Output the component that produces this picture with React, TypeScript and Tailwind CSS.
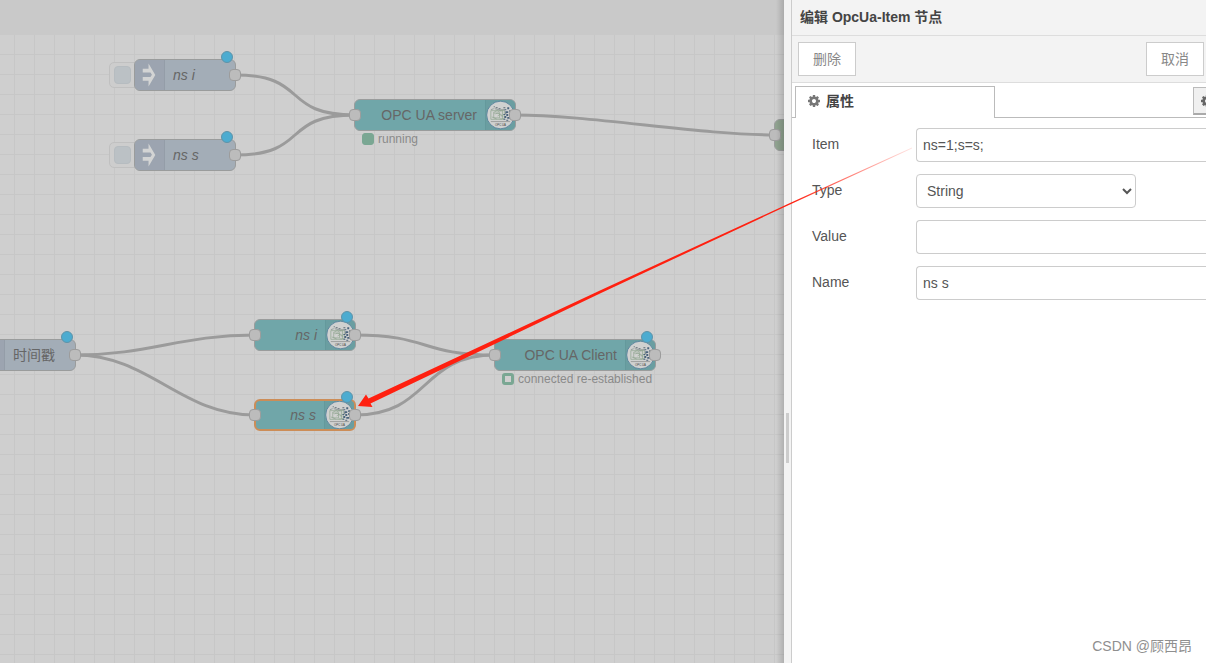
import React from "react";

type NodeKind = "inject" | "opcua" | "debug";

interface FlowNode {
  id: string;
  kind: NodeKind;
  x: number;
  y: number;
  width: number;
  label: string;
  italic?: boolean;
  changed?: boolean;
  selected?: boolean;
  input?: boolean;
  output?: boolean;
  status?: { text: string; ring?: boolean };
}

const nodes: FlowNode[] = [
  { id: "inject-i", kind: "inject", x: 135, y: 60, width: 100, label: "ns i", italic: true, changed: true, output: true },
  { id: "inject-s", kind: "inject", x: 135, y: 140, width: 100, label: "ns s", italic: true, changed: true, output: true },
  { id: "server", kind: "opcua", x: 355, y: 100, width: 160, label: "OPC UA server", input: true, output: true, status: { text: "running" } },
  { id: "debug", kind: "debug", x: 775, y: 120, width: 120, label: "", input: true },
  { id: "timestamp", kind: "inject", x: -25, y: 340, width: 100, label: "时间戳", changed: true, output: true },
  { id: "item-i", kind: "opcua", x: 255, y: 320, width: 100, label: "ns i", italic: true, changed: true, input: true, output: true },
  { id: "item-s", kind: "opcua", x: 255, y: 400, width: 100, label: "ns s", italic: true, changed: true, selected: true, input: true, output: true },
  { id: "client", kind: "opcua", x: 495, y: 340, width: 160, label: "OPC UA Client", changed: true, input: true, output: true, status: { text: "connected re-established", ring: true } },
];

const wires: [string, string][] = [
  ["inject-i", "server"],
  ["inject-s", "server"],
  ["server", "debug"],
  ["timestamp", "item-i"],
  ["timestamp", "item-s"],
  ["item-i", "client"],
  ["item-s", "client"],
];

const kindColors: Record<NodeKind, string> = {
  inject: "bg-[#a3adb7]",
  opcua: "bg-[#70a6a9]",
  debug: "bg-[#8fa28f]",
};

function wirePath(from: string, to: string) {
  const a = nodes.find((n) => n.id === from)!;
  const b = nodes.find((n) => n.id === to)!;
  const x1 = a.x + a.width;
  const y1 = a.y + 15;
  const x2 = b.x;
  const y2 = b.y + 15;
  return `M${x1} ${y1} C${x1 + 75} ${y1} ${x2 - 75} ${y2} ${x2} ${y2}`;
}

function CogIcon({ className }: { className: string }) {
  return (
    <svg viewBox="0 128 1536 1536" className={className} fill="currentColor" aria-hidden="true">
      <path d="M1024 896q0-106-75-181t-181-75-181 75-75 181 75 181 181 75 181-75 75-181zm512-109v222q0 12-8 23t-20 13l-185 28q-19 54-39 91 35 50 107 138 10 12 10 25t-9 23q-27 37-99 108t-94 71q-12 0-26-9l-138-108q-44 23-91 38-16 136-29 186-7 28-36 28h-222q-14 0-24.500-8.500t-11.500-21.500l-28-184q-49-16-90-37l-141 107q-10 9-25 9-14 0-25-11-126-114-165-168-7-10-7-23 0-12 8-23 15-21 51-66.500t54-70.500q-27-50-41-99l-183-27q-13-2-21-12.500t-8-23.500v-222q0-12 8-23t19-13l186-28q14-46 39-92-40-57-107-138-10-12-10-24 0-10 9-23 26-36 98.500-107.500t94.500-71.500q13 0 26 10l138 107q44-23 91-38 16-136 29-186 7-28 36-28h222q14 0 24.500 8.500t11.500 21.500l28 184q49 16 90 37l142-107q9-9 24-9 13 0 25 10 129 119 165 170 7 8 7 22 0 12-8 23-15 21-51 66.500t-54 70.500q26 50 41 98l183 28q13 2 21 12.500t8 23.500z" />
    </svg>
  );
}

function InjectIcon() {
  return (
    <svg viewBox="0 0 30 30" className="h-full w-full" aria-hidden="true">
      <path d="M8 8.500h6V3L21 15L14 27v-6H8v-4h8l1.500-2.200L16 12.500H8z" fill="#d3d4d4" />
    </svg>
  );
}

function OpcUaIcon() {
  return (
    <svg viewBox="0 0 30 30" className="h-full w-full" aria-hidden="true">
      <circle cx="15" cy="15" r="14.300" fill="#d0d1d0" stroke="#55809c" strokeWidth="0.900" />
      <g fill="none" stroke="#8da58d" strokeWidth="0.700">
        <path d="M5 10.500h12v9H5zM7.500 12.500l4-2 3 2M8 13h6v5H8zM6 17l5 2M14 11l5-1v9h-5" />
        <path d="M10 14c1-1 3-1 4 0s2 3 4 2M12 16l3-2 2 2" />
      </g>
      <g fill="#4a637b">
        <path d="M19 9h2v1h-2zM22 7h2v2h-2zM20 11h3v2h-3zM24 10h2v2h-2zM18 14h2v1h-2zM21 14h2v2h-2zM24 13h2v2h-2zM19 16h2v2h-2zM22 17h3v2h-3zM18 19h2v1h-2zM21 20h2v1h-2z" />
        <path d="M8 6h1v1H8zM10 7h2v1h-2zM13 8h2v1h-2zM18 7h2v1h-2zM25 16h1v1h-1zM20 13h1v1h-1z" fill="#5b6870" />
      </g>
      <path d="M5 9.500l3-1M9 8.500l6 1.500M15 9.500h4" fill="none" stroke="#6f7d7a" strokeWidth="0.600" />
      <path d="M5 21.800h20" stroke="#7b7b7b" strokeWidth="0.600" />
      <text x="15" y="26" textAnchor="middle" fontSize="3" fill="#3f3f3f">
        OPC UA
      </text>
    </svg>
  );
}

function Port({ side }: { side: "left" | "right" }) {
  return (
    <span
      className={`absolute top-[9px] h-3 w-3 rounded-[4px] border border-[#9c9c9c] bg-[#bcbcbc] ${
        side === "left" ? "-left-[6px]" : "-right-[6px]"
      }`}
    />
  );
}

function DiagramNode({ node }: { node: FlowNode }) {
  return (
    <div className="absolute" style={{ left: node.x, top: node.y, width: node.width }}>
      {/* Trigger button, sits behind the node body */}
      {node.kind === "inject" && (
        <button
          aria-label={`Inject ${node.label}`}
          className="absolute top-[2px] -left-[26px] flex h-[26px] w-8 items-center rounded-[5px] border border-[#c0c0c0] bg-[#cdcdcd] pl-1"
        >
          <span className="h-[18px] w-[17px] rounded-[4px] border border-[#b6bcc0] bg-[#bbc1c5]" />
        </button>
      )}

      <div
        className={`relative -mx-px -mt-px flex h-8 items-center overflow-hidden rounded-[6px] ${kindColors[node.kind]} ${
          node.selected ? "border-2 border-[#cc8d58]" : "border border-[#9a9c9c]"
        }`}
      >
        {node.kind === "inject" && (
          <span className="h-[30px] w-[30px] shrink-0 border-r border-[#949da8] bg-[#9ca4b0]">
            <InjectIcon />
          </span>
        )}
        <span
          className={`flex-1 px-2 text-sm whitespace-nowrap text-[#666] ${node.italic ? "italic" : ""} ${
            node.kind === "opcua" ? "text-right" : ""
          }`}
        >
          {node.label}
        </span>
        {node.kind === "opcua" && (
          <span className="h-[30px] w-[30px] shrink-0 border-l border-[#64999c] bg-[#6a9ea1]">
            <OpcUaIcon />
          </span>
        )}
      </div>

      {node.input && <Port side="left" />}
      {node.output && <Port side="right" />}
      {node.changed && (
        <span className="absolute -top-[9px] right-[2px] h-3 w-3 rounded-full border border-[#5f93a8] bg-[#4dacd0]" />
      )}
      {node.status && (
        <div className="absolute top-[31px] left-[7px] flex items-center gap-1 text-xs whitespace-nowrap text-[#8a8a8a]">
          <span
            className={`h-3 w-3 rounded-[3px] border-[#7aa793] ${
              node.status.ring ? "border-[3px]" : "border bg-[#7aa793]"
            }`}
          />
          {node.status.text}
        </div>
      )}
    </div>
  );
}

function Workspace() {
  return (
    <main className="relative flex min-w-0 flex-1 flex-col overflow-hidden">
      <div className="z-10 h-[35px] shrink-0 bg-[#c9c9c9]" />
      <div className="flex-1 bg-[#cfcfcf] bg-[linear-gradient(to_right,#c7c7c7_1px,transparent_1px),linear-gradient(to_bottom,#c7c7c7_1px,transparent_1px)] bg-[size:20px_20px] bg-[position:14px_19px]" />
      <svg className="absolute top-0 left-0 h-full w-full" fill="none" stroke="#9b9b9b" strokeWidth="3">
        {wires.map(([from, to]) => (
          <path key={from + to} d={wirePath(from, to)} />
        ))}
      </svg>
      {nodes.map((node) => (
        <DiagramNode key={node.id} node={node} />
      ))}
      <div className="absolute inset-y-0 right-0 z-20 w-2 bg-linear-to-l from-black/15 to-transparent" />
    </main>
  );
}

function FormRow({ id, label, children }: { id: string; label: string; children: React.ReactNode }) {
  return (
    <div className="flex h-[34px]">
      <label htmlFor={id} className="w-[104px] shrink-0 pt-[6px]">
        {label}
      </label>
      {children}
    </div>
  );
}

function TextField({ id, value = "" }: { id: string; value?: string }) {
  return (
    <input
      id={id}
      type="text"
      defaultValue={value}
      className="min-w-0 flex-1 rounded-l-[4px] border border-r-0 border-[#ccc] bg-white px-[6px] outline-none"
    />
  );
}

function EditPanel() {
  return (
    <aside className="flex w-[422px] shrink-0 overflow-hidden bg-white text-sm text-[#555]">
      {/* Resize handle */}
      <div className="flex w-2 shrink-0 flex-col items-center border-r border-[#ccc] bg-[#f3f3f3] pt-[413px]">
        <span className="h-[50px] w-[3px] bg-[#ccc]" />
      </div>

      <div className="flex min-w-0 flex-1 flex-col">
        <h1 className="h-9 border-b border-[#ddd] bg-[#f3f3f3] pl-2 leading-[34px] font-bold text-[#444]">
          编辑 OpcUa-Item 节点
        </h1>
        <div className="flex h-[47px] items-center justify-between border-b border-[#ddd] bg-[#f3f3f3] pr-[2px] pl-[6px]">
          <button className="h-[34px] w-[58px] border border-[#ccc] bg-white text-[#888]">删除</button>
          <button className="h-[34px] w-[58px] border border-[#ccc] bg-white text-[#888]">取消</button>
        </div>

        {/* Tabs */}
        <div className="flex h-[35px] items-end pt-[3px]">
          <span className="w-[3px] self-stretch border-b border-[#bbb]" />
          <button className="flex w-[200px] items-center gap-[6px] self-stretch border border-b-0 border-[#bbb] pb-1 pl-3 font-bold text-[#444]">
            <CogIcon className="h-3 w-3 text-[#777]" />
            属性
          </button>
          <div className="flex flex-1 justify-end self-stretch border-b border-[#bbb]">
            <button
              aria-label="Node settings"
              className="mt-px flex h-7 w-[13px] items-center overflow-hidden border border-r-0 border-b-2 border-[#bbb] border-b-[#aaa] bg-[#f0f0f0] pl-[7px]"
            >
              <CogIcon className="h-3 w-3 shrink-0 text-[#666]" />
            </button>
          </div>
        </div>

        <form className="flex flex-col gap-3 pt-[10px] pl-5">
          <FormRow id="item" label="Item">
            <TextField id="item" value="ns=1;s=s;" />
          </FormRow>
          <FormRow id="type" label="Type">
            <select id="type" defaultValue="String" className="w-[220px] rounded-[4px] border border-[#ccc] bg-white px-[6px]">
              <option>String</option>
              <option>Boolean</option>
              <option>Int32</option>
              <option>Double</option>
            </select>
          </FormRow>
          <FormRow id="value" label="Value">
            <TextField id="value" />
          </FormRow>
          <FormRow id="name" label="Name">
            <TextField id="name" value="ns s" />
          </FormRow>
        </form>
      </div>
    </aside>
  );
}

// Red pointer from the Item field back to the selected node
function PointerArrow() {
  return (
    <svg className="pointer-events-none absolute top-0 left-0 z-30 h-full w-full" aria-hidden="true">
      <defs>
        <linearGradient id="arrow-fade" gradientUnits="userSpaceOnUse" x1="358" y1="406" x2="914" y2="147">
          <stop offset="0" stopColor="#ff2010" />
          <stop offset="0.780" stopColor="#ff2010" />
          <stop offset="1" stopColor="#ff2010" stopOpacity="0.100" />
        </linearGradient>
      </defs>
      <path d="M358 406L366 394.500L368.500 398.500L600 290.500L790 203L912 147.500L912 148.500L790 204.500L600 293.500L370.500 403.500L372.500 407z" fill="url(#arrow-fade)" />
    </svg>
  );
}

export default function App() {
  return (
    <div className="relative flex h-screen overflow-hidden font-['Liberation_Sans','Noto_Sans_CJK_SC',sans-serif]">
      <Workspace />
      <EditPanel />
      <PointerArrow />
      <p className="absolute right-[14px] bottom-[7px] text-sm text-[#8f8f8f]">CSDN @顾西昂</p>
    </div>
  );
}
